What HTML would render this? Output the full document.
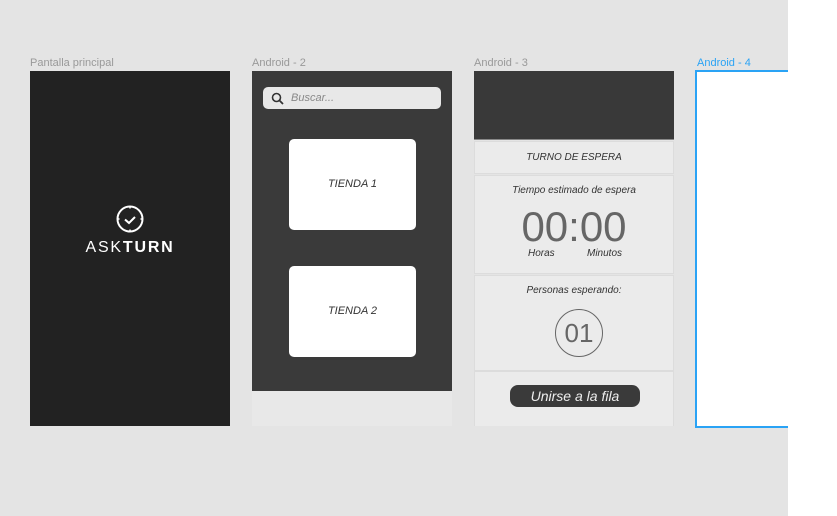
<!DOCTYPE html>
<html><head><style>
*{margin:0;padding:0;box-sizing:border-box}
body{width:837px;height:516px;background:#fff;position:relative;overflow:hidden;font-family:"Liberation Sans",sans-serif}
.bg{position:absolute;left:0;top:0;width:788px;height:516px;background:#e4e4e4}
.a{position:absolute}
.lbl{position:absolute;font-size:11px;color:#999;top:57px}
.it{font-style:italic;color:#333;text-align:center}
.sec{position:absolute;left:474px;width:200px;background:#ebebeb;border:1px solid #dcdcdc}
</style></head><body>
<div class="bg"></div>
<div class="lbl" style="left:30px">Pantalla principal</div>
<div class="lbl" style="left:252px">Android - 2</div>
<div class="lbl" style="left:474px">Android - 3</div>
<div class="lbl" style="left:697px;color:#2aa3f5">Android - 4</div>

<div class="a" style="left:30px;top:71px;width:200px;height:355px;background:#222"></div>
<svg class="a" style="left:115px;top:204px" width="30" height="30" viewBox="0 0 30 30"><circle cx="15" cy="15" r="12.5" fill="none" stroke="#fff" stroke-width="2"/><path d="M10 15.5l4 3.5 6-6" fill="none" stroke="#fff" stroke-width="2"/><path d="M15 2.5v2M15 25.5v2M2.5 15h2M25.5 15h2" stroke="#fff" stroke-width="1.5"/></svg>
<div class="a" style="left:30px;top:239px;width:200px;text-align:center;color:#fff;font-size:16px;letter-spacing:1.8px">ASK<b>TURN</b></div>

<div class="a" style="left:252px;top:71px;width:200px;height:320px;background:#3a3a3a"></div>
<div class="a" style="left:252px;top:391px;width:200px;height:35px;background:#e8e8e8"></div>
<div class="a" style="left:263px;top:87px;width:178px;height:22px;background:#e8e8e8;border-radius:5px"></div>
<svg class="a" style="left:271px;top:92px" width="13" height="13" viewBox="0 0 13 13"><circle cx="5.5" cy="5.5" r="4" fill="none" stroke="#333" stroke-width="1.6"/><path d="M8.5 8.5l3.5 3.5" stroke="#333" stroke-width="1.8"/></svg>
<div class="a it" style="left:291px;top:92px;font-size:11px;color:#888">Buscar...</div>
<div class="a" style="left:289px;top:139px;width:127px;height:91px;background:#fff;border-radius:5px"></div>
<div class="a it" style="left:289px;top:178px;width:127px;font-size:11px">TIENDA 1</div>
<div class="a" style="left:289px;top:266px;width:127px;height:91px;background:#fff;border-radius:5px"></div>
<div class="a it" style="left:289px;top:305px;width:127px;font-size:11px">TIENDA 2</div>

<div class="a" style="left:474px;top:71px;width:200px;height:355px;background:#e4e4e4"></div>
<div class="a" style="left:474px;top:71px;width:200px;height:69px;background:#393939;border-bottom:1px solid #888"></div>
<div class="sec" style="top:141px;height:33px"></div>
<div class="a it" style="left:474px;top:152px;width:200px;font-size:10px">TURNO DE ESPERA</div>
<div class="sec" style="top:175px;height:99px"></div>
<div class="a it" style="left:474px;top:185px;width:200px;font-size:10px">Tiempo estimado de espera</div>
<div class="a" style="left:474px;top:201px;width:200px;text-align:center;font-size:42px;color:#666;line-height:52px">00:00</div>
<div class="a it" style="left:528px;top:248px;font-size:10px">Horas</div>
<div class="a it" style="left:587px;top:248px;font-size:10px">Minutos</div>
<div class="sec" style="top:275px;height:96px"></div>
<div class="a it" style="left:474px;top:285px;width:200px;font-size:10px">Personas esperando:</div>
<div class="a" style="left:555px;top:309px;width:48px;height:48px;border:1px solid #666;border-radius:50%;text-align:center;font-size:26px;line-height:46px;color:#666">01</div>
<div class="sec" style="top:371px;height:55px;border-bottom:none"></div>
<div class="a" style="left:510px;top:385px;width:130px;height:22px;background:#3a3a3a;border-radius:8px;color:#eee;font-style:italic;font-size:14px;text-align:center;line-height:22px">Unirse a la fila</div>

<div class="a" style="left:695px;top:70px;width:93px;height:358px;background:#fff;border:2px solid #2aa3f5;border-right:none"></div>
</body></html>
